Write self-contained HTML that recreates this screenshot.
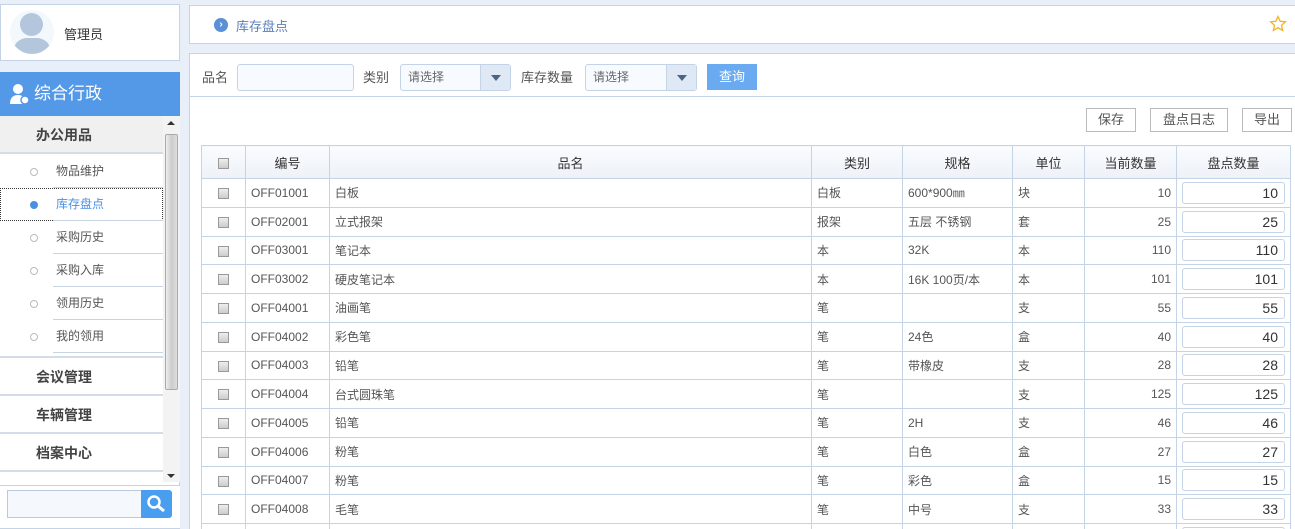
<!DOCTYPE html>
<html><head><meta charset="utf-8"><style>
*{box-sizing:border-box;margin:0;padding:0}
html{width:1295px;height:529px;overflow:hidden}
body{width:1295px;height:529px;overflow:hidden;background:#e8eff9;font-family:"Liberation Sans","Noto Sans CJK SC",sans-serif;font-size:12px;color:#555;position:relative}
.abs{position:absolute}
.user{left:0;top:4px;width:180px;height:57px;background:#fff;border:1px solid #c5d3e6}
.side{left:0;top:72px;width:180px;height:470px;background:#fff;border-right:1px solid #c5d3e6}
.bluehd{left:0;top:0;width:180px;height:44px;background:#5499e8;color:#fff;font-size:17px;line-height:44px;padding-left:34px}
.grp{left:0;width:163px;height:38px;border-bottom:2px solid #d3dde9;font-size:14px;font-weight:bold;color:#444;line-height:38px;padding-left:36px}
.item{left:0;width:163px;height:33px;line-height:33px;padding-left:56px;font-size:12px;color:#555}
.item:after{content:"";position:absolute;left:53px;right:0;bottom:0;border-bottom:1px solid #c9d4e2}
.dot{position:absolute;left:30px;top:13px;width:8px;height:8px;border:1px solid #bbb;border-radius:50%}
.top{left:189px;top:5px;width:1106px;height:39px;background:#fff;border:1px solid #c5d3e6;border-right:none}
.main{left:189px;top:53px;width:1106px;height:490px;background:#fff;border:1px solid #c5d3e6;border-right:none;overflow:hidden}
.inp{position:absolute;height:27px;border:1px solid #c5d3e6;border-radius:3px;background:#f7fbff;top:10px}
.sel{color:#666;line-height:25px;padding-left:7px}
.sel b{position:absolute;right:0;top:0;width:30px;height:25px;background:#dfe9f5;border-left:1px solid #c5d3e6}
.sel b:after{content:"";position:absolute;left:10px;top:10px;border:5px solid transparent;border-top:6px solid #4d6580}
.lbl{position:absolute;top:10px;line-height:27px;font-size:13px;color:#555}
.btn{position:absolute;top:54px;height:24px;border:1px solid #bbb;line-height:22px;text-align:center;font-size:13px;color:#555;background:#fff}
table{position:absolute;left:11px;top:91px;border-collapse:collapse;width:1090px}
td,th{border:1px solid #c5d3e6;height:28.75px;font-size:12px;color:#555;padding:0 5px;white-space:nowrap;vertical-align:middle}
th{height:33px;background:linear-gradient(#fafcfe,#edf2f8);font-weight:normal;font-size:13px;color:#333}
.cb{display:inline-block;width:11px;height:11px;border:1px solid #999;background:linear-gradient(#eee,#ccc);vertical-align:middle}
.num{text-align:right}
.q{display:block;height:22px;border:1px solid #c5d3e6;border-radius:3px;text-align:right;font-size:14px;line-height:20px;padding-right:6px;color:#333}
</style></head><body>
<div class="abs user">
<div class="abs" style="left:9px;top:5px;width:44px;height:44px;border-radius:50%;background:#f3f8fd;overflow:hidden">
<div class="abs" style="left:10px;top:3px;width:23px;height:23px;border-radius:50%;background:#b4c6dc"></div>
<div class="abs" style="left:3px;top:28px;width:38px;height:24px;border-radius:14px 14px 0 0;background:#b4c6dc"></div></div>
<div class="abs" style="left:63px;top:19px;font-size:13px;color:#333">管理员</div></div>
<div class="abs side">
<div class="abs bluehd"><svg class="abs" style="left:9px;top:11px" width="22" height="22" viewBox="0 0 22 22"><circle cx="9" cy="6" r="5" fill="#fff"/><path d="M1 21c0-7 4-9 8-9s6 2 7 4l-2 5z" fill="#fff"/><circle cx="16" cy="17" r="4" fill="#fff" stroke="#5499e8" stroke-width="1.5"/></svg>综合行政</div>
<div class="abs grp" style="top:44px;background:#f0f0f0">办公用品</div>
<div class="abs item" style="top:83px"><i class="dot"></i>物品维护</div>
<div class="abs item" style="top:116px;color:#4a90e2;outline:1px dotted #333;outline-offset:-1px"><i class="dot" style="background:#4a90e2;border-color:#4a90e2"></i>库存盘点</div>
<div class="abs item" style="top:149px"><i class="dot"></i>采购历史</div>
<div class="abs item" style="top:182px"><i class="dot"></i>采购入库</div>
<div class="abs item" style="top:215px"><i class="dot"></i>领用历史</div>
<div class="abs item" style="top:248px"><i class="dot"></i>我的领用</div>
<div class="abs grp" style="top:284px;border-top:2px solid #d3dde9;height:40px">会议管理</div>
<div class="abs grp" style="top:324px">车辆管理</div>
<div class="abs grp" style="top:362px">档案中心</div>
<div class="abs" style="left:163px;top:44px;width:17px;height:366px;background:#f3f3f3"></div>
<div class="abs" style="left:165px;top:62px;width:13px;height:256px;background:linear-gradient(90deg,#eee,#ccc,#ddd);border:1px solid #aaa;border-radius:2px"></div>
<div class="abs" style="left:167px;top:49px;border:4px solid transparent;border-bottom:4px solid #333;border-top:0"></div>
<div class="abs" style="left:167px;top:402px;border:4px solid transparent;border-top:4px solid #333;border-bottom:0"></div>
<div class="abs" style="left:0;top:413px;width:180px;height:44px;background:#fff;border-top:1px solid #c5d3e6;border-bottom:1px solid #c5d3e6"></div>
<div class="abs" style="left:7px;top:418px;width:135px;height:28px;border:1px solid #b9c9de;background:#f5f9fe"></div>
<div class="abs" style="left:141px;top:418px;width:31px;height:28px;background:#4a9ef0;border-radius:0 3px 3px 0"><svg width="31" height="28"><circle cx="13" cy="12" r="5.5" fill="none" stroke="#fff" stroke-width="2.5"/><path d="M17 16l6 5" stroke="#fff" stroke-width="3"/></svg></div>
</div>
<div class="abs top">
<div class="abs" style="left:24px;top:12px;width:14px;height:14px;border-radius:50%;background:#5b8fd6;color:#fff;font-size:10px;line-height:14px;text-align:center;font-weight:bold">›</div>
<div class="abs" style="left:46px;top:10px;font-size:13px;color:#5b7fb8">库存盘点</div>
<svg class="abs" style="left:1079px;top:9px" width="18" height="18" viewBox="0 0 18 18"><path d="M9 1.5l2.2 4.8 5.2.5-3.9 3.5 1.1 5.1L9 12.8l-4.6 2.6 1.1-5.1L1.6 6.8l5.2-.5z" fill="none" stroke="#f5b024" stroke-width="1.3"/></svg>
</div>
<div class="abs main">
<div class="abs" style="left:0;top:42px;width:1106px;border-bottom:1px solid #c5d3e6"></div>
<span class="lbl" style="left:12px">品名</span>
<div class="inp" style="left:47px;width:117px"></div>
<span class="lbl" style="left:173px">类别</span>
<div class="inp sel" style="left:210px;width:111px">请选择<b></b></div>
<span class="lbl" style="left:331px">库存数量</span>
<div class="inp sel" style="left:395px;width:112px">请选择<b></b></div>
<div class="abs" style="left:517px;top:10px;width:50px;height:26px;background:#6aaaf0;color:#fff;text-align:center;line-height:26px;font-size:13px">查询</div>
<div class="btn" style="left:896px;width:50px">保存</div>
<div class="btn" style="left:960px;width:78px">盘点日志</div>
<div class="btn" style="left:1052px;width:50px">导出</div>
<table>
<tr><th style="width:44px"><span class="cb"></span></th><th style="width:84px">编号</th><th style="width:482px">品名</th><th style="width:91px">类别</th><th style="width:110px">规格</th><th style="width:72px">单位</th><th style="width:92px">当前数量</th><th>盘点数量</th></tr>
<tr><td align=center><span class="cb"></span></td><td>OFF01001</td><td>白板</td><td>白板</td><td>600*900㎜</td><td>块</td><td class=num>10</td><td><span class=q>10</span></td></tr>
<tr><td align=center><span class="cb"></span></td><td>OFF02001</td><td>立式报架</td><td>报架</td><td>五层 不锈钢</td><td>套</td><td class=num>25</td><td><span class=q>25</span></td></tr>
<tr><td align=center><span class="cb"></span></td><td>OFF03001</td><td>笔记本</td><td>本</td><td>32K</td><td>本</td><td class=num>110</td><td><span class=q>110</span></td></tr>
<tr><td align=center><span class="cb"></span></td><td>OFF03002</td><td>硬皮笔记本</td><td>本</td><td>16K 100页/本</td><td>本</td><td class=num>101</td><td><span class=q>101</span></td></tr>
<tr><td align=center><span class="cb"></span></td><td>OFF04001</td><td>油画笔</td><td>笔</td><td></td><td>支</td><td class=num>55</td><td><span class=q>55</span></td></tr>
<tr><td align=center><span class="cb"></span></td><td>OFF04002</td><td>彩色笔</td><td>笔</td><td>24色</td><td>盒</td><td class=num>40</td><td><span class=q>40</span></td></tr>
<tr><td align=center><span class="cb"></span></td><td>OFF04003</td><td>铅笔</td><td>笔</td><td>带橡皮</td><td>支</td><td class=num>28</td><td><span class=q>28</span></td></tr>
<tr><td align=center><span class="cb"></span></td><td>OFF04004</td><td>台式圆珠笔</td><td>笔</td><td></td><td>支</td><td class=num>125</td><td><span class=q>125</span></td></tr>
<tr><td align=center><span class="cb"></span></td><td>OFF04005</td><td>铅笔</td><td>笔</td><td>2H</td><td>支</td><td class=num>46</td><td><span class=q>46</span></td></tr>
<tr><td align=center><span class="cb"></span></td><td>OFF04006</td><td>粉笔</td><td>笔</td><td>白色</td><td>盒</td><td class=num>27</td><td><span class=q>27</span></td></tr>
<tr><td align=center><span class="cb"></span></td><td>OFF04007</td><td>粉笔</td><td>笔</td><td>彩色</td><td>盒</td><td class=num>15</td><td><span class=q>15</span></td></tr>
<tr><td align=center><span class="cb"></span></td><td>OFF04008</td><td>毛笔</td><td>笔</td><td>中号</td><td>支</td><td class=num>33</td><td><span class=q>33</span></td></tr>
<tr><td></td><td></td><td></td><td></td><td></td><td></td><td></td><td><span class=q></span></td></tr>
</table>
</div>
</body></html>
